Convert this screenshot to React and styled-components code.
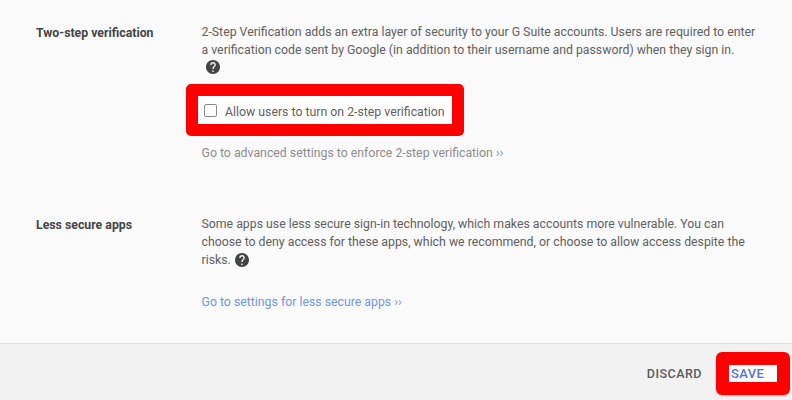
import React from "react";
import styled, { createGlobalStyle } from "styled-components";

const Global = createGlobalStyle`
  html, body { margin: 0; padding: 0; height: 400px; overflow: hidden; }
  body { background: #fafafa; font-family: Roboto, "Liberation Sans", sans-serif; }
`;

const Page = styled.div`
  width: 792px;
  height: 400px;
  display: flex;
  flex-direction: column;
  background: #fafafa;
`;

const Content = styled.main`
  flex: 1;
  display: flex;
  flex-direction: column;
  gap: 54px;
  padding: 24px 36px 0;
`;

const Row = styled.section`
  display: grid;
  grid-template-columns: 165.5px 570px;
`;

const Label = styled.h3`
  margin: 0;
  font-size: 12.3px;
  line-height: 18px;
  font-weight: 700;
  color: #444;
`;

const Body = styled.div`
  display: flex;
  flex-direction: column;
  align-items: flex-start;
`;

const Text = styled.p`
  margin: 0;
  font-size: 12.3px;
  line-height: 17.7px;
  color: #606060;
  white-space: nowrap;
`;

const Help = styled.svg`
  width: 14px;
  height: 14px;
  fill: #444;
  vertical-align: -3px;
  margin-left: ${(p) => p.$gap}px;
`;

const Highlight = styled.div`
  margin: 7px 0 0 -15.5px;
  border: 12px solid #fe0000;
  border-radius: 5px;
  background: #fff;
`;

const CheckRow = styled.label`
  display: flex;
  align-items: center;
  gap: 8.5px;
  width: 253.5px;
  height: 27.5px;
  padding: 4px 0 0 5.5px;
  box-sizing: border-box;
  font-size: 12.3px;
  color: #606060;
`;

const Box = styled.span`
  width: 11px;
  height: 11px;
  margin-top: -3px;
  border: 1.5px solid #8a8a8a;
  border-radius: 2px;
`;

const GoLink = styled.a`
  margin-top: ${(p) => p.$top}px;
  font-size: 12.3px;
  line-height: 18px;
  color: ${(p) => (p.$muted ? "#8c8c8c" : "#6f96e0")};
`;

const Footer = styled.footer`
  height: 57px;
  box-sizing: border-box;
  border-top: 1px solid #e0e0e0;
  background: #f2f2f2;
  display: flex;
  align-items: flex-start;
  justify-content: flex-end;
  padding: 8px 2px 0 0;
  gap: 14px;
`;

const Discard = styled.span`
  margin-top: 14px;
  font-size: 12.5px;
  line-height: 15px;
  font-weight: 500;
  letter-spacing: 0.5px;
  color: #5a5a5a;
`;

const SaveFrame = styled.div`
  border: 13px solid #fe0000;
  border-radius: 6px;
  box-shadow: 0 1px 2px rgba(0, 0, 0, 0.25);
  background: #fff;
  width: 46px;
  height: 17px;
  display: flex;
  align-items: center;
  padding-left: 2px;
  font-size: 13px;
  font-weight: 500;
  letter-spacing: 0.4px;
  color: #4f74cf;
`;

const HelpIcon = ({ gap }) => (
  <Help $gap={gap} viewBox="2 2 20 20">
    <path d="M12 2C6.48 2 2 6.48 2 12s4.48 10 10 10 10-4.48 10-10S17.52 2 12 2zm1 17h-2v-2h2v2zm2.07-7.75l-.9.92C13.45 12.9 13 13.5 13 15h-2v-.5c0-1.1.45-2.1 1.17-2.83l1.24-1.26c.37-.36.59-.86.59-1.41 0-1.1-.9-2-2-2s-2 .9-2 2H8c0-2.21 1.79-4 4-4s4 1.79 4 4c0 .88-.36 1.68-.93 2.25z" />
  </Help>
);

export default function App() {
  return (
    <Page>
      <Global />
      <Content>
        <Row>
          <Label>Two-step verification</Label>
          <Body>
            <Text>
              2-Step Verification adds an extra layer of security to your G Suite accounts. Users are required to enter
              <br />
              a verification code sent by Google (in addition to their username and password) when they sign in.
              <br />
              <HelpIcon gap={4.5} />
            </Text>
            <Highlight>
              <CheckRow>
                <Box />
                Allow users to turn on 2-step verification
              </CheckRow>
            </Highlight>
            <GoLink $muted $top={8.5}>Go to advanced settings to enforce 2-step verification ››</GoLink>
          </Body>
        </Row>
        <Row>
          <Label>Less secure apps</Label>
          <Body>
            <Text>
              Some apps use less secure sign-in technology, which makes accounts more vulnerable. You can
              <br />
              choose to deny access for these apps, which we recommend, or choose to allow access despite the
              <br />
              risks.
              <HelpIcon gap={4} />
            </Text>
            <GoLink $top={24}>Go to settings for less secure apps ››</GoLink>
          </Body>
        </Row>
      </Content>
      <Footer>
        <Discard>DISCARD</Discard>
        <SaveFrame>SAVE</SaveFrame>
      </Footer>
    </Page>
  );
}
